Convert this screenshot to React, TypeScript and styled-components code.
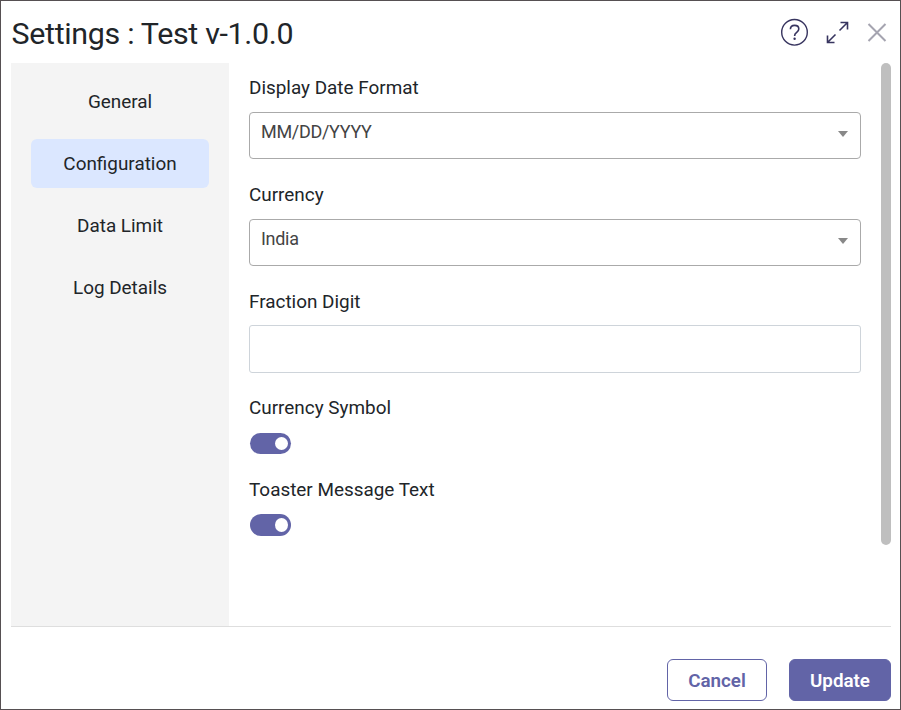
import React from "react";
import styled, { createGlobalStyle } from "styled-components";

const GlobalStyle = createGlobalStyle`
  * { box-sizing: border-box; }
  body { margin: 0; background: #fff; font-family: Roboto, sans-serif; color: #212529; overflow: hidden; }
`;

const Dialog = styled.div`
  width: 901px;
  height: 710px;
  border: 1px solid #565052;
  display: flex;
  flex-direction: column;
  background: #fff;
`;
const Header = styled.header`
  height: 62px;
  flex: none;
  padding: 0 13px 0 10.5px;
  display: flex;
  align-items: center;
  justify-content: space-between;
`;
const Title = styled.h1`
  margin: 3px 0 0;
  font-size: 30.4px;
  letter-spacing: -0.32px;
  line-height: 40px;
  font-weight: 400;
`;
const Actions = styled.div`
  display: flex;
  align-items: center;
  gap: 17px;
  svg { display: block; }
`;
const Body = styled.div`
  height: 564px;
  flex: none;
  margin: 0 9px 0 10px;
  border-bottom: 1px solid #dedede;
  display: flex;
`;
const Sidebar = styled.nav`
  width: 218px;
  background: #f4f4f4;
  padding: 14px 20px;
  display: flex;
  flex-direction: column;
  gap: 13px;
`;
const Tab = styled.div<{ $active?: boolean }>`
  height: 49px;
  flex: none;
  border-radius: 6px;
  display: flex;
  align-items: center;
  justify-content: center;
  font-size: 18.9px;
  background: ${(p) => (p.$active ? "#dbe7ff" : "transparent")};
`;
const Form = styled.main`
  flex: 1;
  padding: 12px 20px 0;
`;
const Label = styled.div`
  height: 25px;
  font-size: 18.9px;
  line-height: 25px;
`;
const Select = styled.div`
  height: 47px;
  margin: 12px 0 23px;
  padding: 0 12px 8px 11px;
  border: 1px solid #aaa;
  border-radius: 4px;
  display: flex;
  align-items: center;
  justify-content: space-between;
  font-size: 18px;
  letter-spacing: -0.3px;
  color: #444;
`;
const Caret = styled.i`
  border: 5px solid transparent;
  border-top: 6px solid #888;
  border-bottom: 0;
  margin-top: 5px;
`;
const Input = styled.div`
  height: 48px;
  margin: 11px 0 22px;
  border: 1px solid #ced4da;
  border-radius: 3px;
`;
const Toggle = styled.div<{ $tall?: boolean }>`
  width: 41px;
  height: ${(p) => (p.$tall ? 22 : 21)}px;
  margin: ${(p) => (p.$tall ? 12 : 13)}px 0 23px 1px;
  padding: 0 3px;
  border-radius: 11px;
  background: #6264a7;
  display: flex;
  align-items: center;
  justify-content: flex-end;
`;
const Knob = styled.span<{ $tall?: boolean }>`
  width: 13px;
  height: ${(p) => (p.$tall ? 14 : 13)}px;
  border-radius: 50%;
  background: #fff;
`;
const Scrollbar = styled.div`
  width: 10px;
  height: 482px;
  border-radius: 5px;
  background: #bfbfbf;
`;
const Footer = styled.footer`
  display: flex;
  justify-content: flex-end;
  gap: 22px;
  padding: 32px 9px 0;
`;
const Button = styled.button<{ $primary?: boolean }>`
  width: ${(p) => (p.$primary ? 102 : 100)}px;
  height: 42px;
  padding: 2px 0 0;
  border: 1px solid #6264a7;
  border-radius: 6px;
  font: 600 18.8px Roboto, sans-serif;
  background: ${(p) => (p.$primary ? "#6264a7" : "#fff")};
  color: ${(p) => (p.$primary ? "#fff" : "#6264a7")};
`;

const HelpIcon = () => (
  <svg width="28" height="28" viewBox="0 0 28 28" fill="none" stroke="#37345f" strokeWidth="1.4">
    <circle cx="13.5" cy="14.3" r="12.8" />
    <path d="M9.400 11.300c0-2.400 1.700-3.900 4.200-3.900s4.200 1.400 4.200 3.600c0 1.600-.9 2.400-2.100 3.300-1.300 1-2 1.600-2 3v.6" strokeWidth="1.6" />
    <circle cx="13.6" cy="20.700" r="1.200" fill="#37345f" stroke="none" />
  </svg>
);
const ExpandIcon = () => (
  <svg width="24" height="24" viewBox="0 0 24 24" fill="none" stroke="#37345f" strokeWidth="1.6">
    <path d="M13.500 10.500L21.500 2.500M14.500 2.500h7v7M9.500 14.500l-8 8M1.500 15.500v7h7" />
  </svg>
);
const CloseIcon = () => (
  <svg width="20" height="20" viewBox="0 0 20 20" stroke="#a5a4b0" strokeWidth="2">
    <path d="M1.500 2l17 17M18.500 2l-17 17" />
  </svg>
);

const tabs = ["General", "Configuration", "Data Limit", "Log Details"];

export default function App() {
  return (
    <>
      <GlobalStyle />
      <Dialog>
        <Header>
          <Title>Settings : Test v-1.0.0</Title>
          <Actions><HelpIcon /><ExpandIcon /><CloseIcon /></Actions>
        </Header>
        <Body>
          <Sidebar>
            {tabs.map((t) => <Tab key={t} $active={t === "Configuration"}>{t}</Tab>)}
          </Sidebar>
          <Form>
            <Label>Display Date Format</Label>
            <Select>MM/DD/YYYY<Caret /></Select>
            <Label>Currency</Label>
            <Select>India<Caret /></Select>
            <Label>Fraction Digit</Label>
            <Input />
            <Label>Currency Symbol</Label>
            <Toggle><Knob /></Toggle>
            <Label>Toaster Message Text</Label>
            <Toggle $tall><Knob $tall /></Toggle>
          </Form>
          <Scrollbar />
        </Body>
        <Footer>
          <Button>Cancel</Button>
          <Button $primary>Update</Button>
        </Footer>
      </Dialog>
    </>
  );
}
